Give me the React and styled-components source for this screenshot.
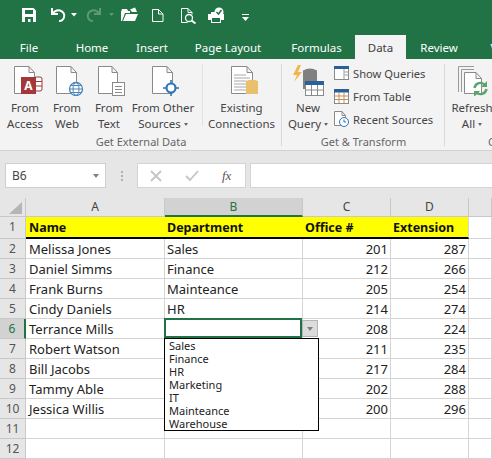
import React from "react";
import styled, { createGlobalStyle } from "styled-components";

const Global = createGlobalStyle`
  html, body { margin: 0; padding: 0; width: 492px; height: 459px; overflow: hidden; background: #fff; }
  #root { width: 492px; height: 459px; overflow: hidden; }
  * { box-sizing: border-box; }
`;

const FONT = `"Noto Sans", "Open Sans", sans-serif`;
const GREEN = "#217346";
const LINE = "#d4d4d4";

const Page = styled.div`
  width: 492px; height: 459px; overflow: hidden;
  font-family: ${FONT}; display: flex; flex-direction: column; background: #fff;
`;
const Head = styled.header`
  background: ${GREEN}; height: 59px; flex: none; display: flex; flex-direction: column;
`;
const Quick = styled.div`
  height: 35px; display: flex; align-items: flex-start; padding-left: 22px;
`;
const QuickIcon = styled.svg`
  flex: none; width: ${p => p.$w}px; height: 28px; display: block; margin-left: ${p => p.$gap || 0}px;
`;
const Tabs = styled.nav`
  height: 24px; display: flex; align-items: stretch; white-space: nowrap; overflow: hidden;
`;
const Tab = styled.div`
  flex: none; width: ${p => p.$w}px; text-align: center; font-size: 11.5px; line-height: 25px;
  color: ${p => (p.$active ? "#3d3d3d" : "#fff")};
  background: ${p => (p.$active ? "#f3f3f3" : "transparent")};
`;
const Ribbon = styled.section`
  height: 92px; flex: none; background: #f3f3f3; display: flex; overflow: hidden;
  border-bottom: 1px solid #d2d2d2;
`;
const Group = styled.div`
  flex: none; width: ${p => p.$w}px; height: 91px; display: flex; flex-direction: column;
  padding-top: 5px; position: relative;
  &::after { content: ""; position: absolute; right: 0; top: 5px; bottom: 4px; width: 1px; background: #d8d8d8; }
`;
const GroupBody = styled.div`
  height: 71px; display: flex; padding-left: ${p => p.$pad || 0}px;
`;
const GroupLabel = styled.div`
  font-size: 11px; line-height: 16px; text-align: center; color: #666; white-space: nowrap;
`;
const Big = styled.div`
  flex: none; width: ${p => p.$w}px; display: flex; flex-direction: column; align-items: center;
  color: #444; text-align: center; white-space: nowrap;
`;
const BigLabel = styled.div`
  font-size: 11.5px; line-height: 16px;
`;
const BigIcon = styled.svg`
  width: 36px; height: 32px; flex: none; margin-bottom: 4px; display: block;
`;
const Divider = styled.div`
  flex: none; width: 1px; height: 62px; background: #e2e2e2; margin: 0 0 0 6px;
`;
const Caret = styled.span`
  display: inline-block; width: 0; height: 0; margin-left: 3px; vertical-align: 2px;
  border-left: 2.5px solid transparent; border-right: 2.5px solid transparent; border-top: 3px solid #666;
`;
const SmallCol = styled.div`
  display: flex; flex-direction: column; gap: 7px; padding-top: 1px; margin-left: 1px;
`;
const Small = styled.div`
  display: flex; align-items: center; gap: 4px; height: 16px; font-size: 11.2px; color: #444; white-space: nowrap;
`;
const SmallIcon = styled.svg`
  width: 15px; height: 16px; flex: none; display: block;
`;
const FormulaBar = styled.section`
  height: 47px; flex: none; background: #e6e6e6; padding: 12px 0 10px 5px; display: flex;
`;
const NameBox = styled.div`
  width: 101px; background: #fff; border: 1px solid #cfcfcf; display: flex; align-items: center;
  justify-content: space-between; padding: 0 6px; font-size: 12px; color: #444;
`;
const ArrowDown = styled.span`
  width: 0; height: 0; border-left: 3.5px solid transparent; border-right: 3.5px solid transparent;
  border-top: 4px solid #808080;
`;
const Grip = styled.div`
  width: 31px; display: flex; flex-direction: column; align-items: center; justify-content: center; gap: 2px;
`;
const GripDot = styled.span`
  width: 2px; height: 2px; background: #b0b0b0;
`;
const FxBox = styled.div`
  width: 109px; background: #fff; border: 1px solid #d4d4d4; display: flex; align-items: center;
`;
const FxSlot = styled.svg`
  flex: none; width: ${p => p.$w}px; height: 14px; display: block;
`;
const FxText = styled.span`
  font-family: "Liberation Serif", serif; font-style: italic; font-size: 13px; color: #555; margin-left: 12px;
`;
const FormulaInput = styled.div`
  flex: 1; margin-left: 4px; background: #fff; border: 1px solid #d4d4d4; border-right: 0;
`;
const Sheet = styled.section`
  display: grid; grid-template-columns: 26px 139px 138px 88px 78px 23px;
  grid-template-rows: 19px 22px repeat(11, 20px); flex: none;
  font-size: 13px; color: #222; background: #fff;
`;
const CornerCell = styled.div`
  background: #e6e6e6; border-right: 1px solid #c8c8c8; border-bottom: 1px solid #c8c8c8; position: relative;
  &::after {
    content: ""; position: absolute; right: 3px; bottom: 2px; width: 0; height: 0;
    border-left: 13px solid transparent; border-bottom: 12px solid #b5b5b5;
  }
`;
const ColHead = styled.div`
  text-align: center; font-size: 12px; line-height: 18px; color: ${p => (p.$on ? GREEN : "#444")};
  background: ${p => (p.$on ? "#d2d2d2" : "#e6e6e6")};
  border-right: 1px solid #c8c8c8;
  border-bottom: ${p => (p.$on ? `2px solid ${GREEN}` : "1px solid #c8c8c8")};
`;
const RowHead = styled.div`
  text-align: center; font-size: 12px; line-height: 19px; color: ${p => (p.$on ? GREEN : "#555")};
  background: ${p => (p.$on ? "#d2d2d2" : "#e6e6e6")};
  border-bottom: 1px solid #c8c8c8;
  border-right: ${p => (p.$on ? `2px solid ${GREEN}` : "1px solid #c8c8c8")};
`;
const Cell = styled.div`
  position: relative; padding: 0 2px 0 ${p => (p.$first ? 3 : 2)}px; line-height: 20px; white-space: nowrap;
  text-align: ${p => (p.$num ? "right" : "left")};
  border-right: 1px solid ${LINE}; border-bottom: 1px solid ${LINE};
`;
const HeadCell = styled.div`
  padding: 0 2px 0 ${p => (p.$first ? 3 : 2)}px; font-weight: 700; font-size: 12.5px; line-height: 21px;
  white-space: nowrap; color: #111;
  background: #ffff00; border-bottom: 2px solid #000;
  border-right: ${p => (p.$last ? `1px solid ${LINE}` : "0")};
`;
const Selection = styled.div`
  position: absolute; left: -1px; top: -1px; right: 0; bottom: 0; border: 2px solid ${GREEN}; z-index: 2;
`;
const DropButton = styled.div`
  position: absolute; left: 100%; top: 1px; width: 16px; height: 17px; z-index: 3;
  background: #dcdcdc; border: 1px solid #b5b5b5; display: flex; align-items: center; justify-content: center;
`;
const DropList = styled.ul`
  position: absolute; left: -1px; top: 19px; width: 155px; height: 93px; z-index: 4; margin: 0; padding: 0 0 0 4px;
  list-style: none; background: #fff; border: 1px solid #000; font-size: 11px; line-height: 13px; color: #222;
`;

const Doc = ({ x, y, w, h, fold = 6, stroke = "#8a8a8a", fill = "#fff" }) => (
  <path
    d={`M${x + 0.5} ${y + 0.5}H${x + w - fold}L${x + w - 0.5} ${y + fold + 0.5}V${y + h - 0.5}H${x + 0.5}ZM${x + w - fold} ${y + 0.5}V${y + fold + 0.5}H${x + w - 0.5}`}
    fill={fill} stroke={stroke} />
);

const Access = () => (
  <BigIcon viewBox="0 0 36 32">
    <Doc x={7} y={2} w={21} h={28} />
    <rect x="27" y="13" width="8" height="14" rx="2" fill="#fff" stroke="#a4373a" />
    <path d="M27 17.500h8M27 22h8" stroke="#a4373a" />
    <rect x="14" y="13" width="15" height="17" fill="#a4373a" />
    <text x="21.500" y="26" textAnchor="middle" fontSize="12" fontWeight="700" fill="#fff" fontFamily="Noto Sans">A</text>
  </BigIcon>
);
const Web = () => (
  <BigIcon viewBox="0 0 36 32">
    <Doc x={7} y={2} w={21} h={28} />
    <circle cx="27" cy="25" r="6.500" fill="#fff" stroke="#4a86b8" strokeWidth="1.300" />
    <ellipse cx="27" cy="25" rx="3" ry="6.500" fill="none" stroke="#4a86b8" />
    <path d="M20.500 25h13M21.500 21.500h11M21.500 28.500h11" stroke="#4a86b8" />
  </BigIcon>
);
const TextFile = () => (
  <BigIcon viewBox="0 0 36 32">
    <Doc x={7} y={2} w={20} h={28} />
    <rect x="21.500" y="18.500" width="12" height="13" fill="#fff" stroke="#8a8a8a" />
    <path d="M24 22.500h7M24 25.500h7M24 28.500h7" stroke="#8a8a8a" />
  </BigIcon>
);
const Other = () => (
  <BigIcon viewBox="0 0 36 32">
    <Doc x={7} y={2} w={21} h={28} />
    <circle cx="26" cy="24" r="4.500" fill="#fff" stroke="#2e75b5" strokeWidth="2.200" />
    <path d="M26 16v4M26 28v4M18 24h4M30 24h4" stroke="#2e75b5" strokeWidth="1.600" />
  </BigIcon>
);
const Existing = () => (
  <BigIcon viewBox="0 0 36 32">
    <Doc x={7} y={2} w={22} h={28} />
    <path d="M10 11h12M10 14h16M10 17h12M10 20h12M10 23h12M10 26h12" stroke="#a8a8a8" />
    <path d="M22 17q6-2.500 12 0V30H22Z" fill="#e8c06e" />
  </BigIcon>
);
const Query = () => (
  <BigIcon viewBox="0 0 36 32">
    <path d="M8 1L3 11h4L4 18l8-10H8l3-7Z" fill="#f3b64d" />
    <path d="M13 6.500q7-4 14 0V25H13Z" fill="#808080" />
    <rect x="15.500" y="17.500" width="18" height="14" fill="#fff" stroke="#8a8a8a" />
    <rect x="15" y="17" width="19" height="4" fill="#2a6099" />
    <path d="M21.500 21v10M27.500 21v10M16 26h17" stroke="#8a8a8a" />
  </BigIcon>
);
const Refresh = () => (
  <BigIcon viewBox="0 0 36 32">
    <path d="M4.500 28V2.500H20M7.500 28V5.500H20" fill="none" stroke="#9a9a9a" />
    <Doc x={10} y={8} w={18} h={22} />
    <path d="M20.500 24a6 6 0 0 1 10.500-3M32.500 25a6 6 0 0 1-10.500 3" fill="none" stroke="#5aa36e" strokeWidth="2.400" />
    <path d="M33 17v6h-6ZM20 33v-6h6Z" fill="#5aa36e" />
  </BigIcon>
);

const ShowQ = () => (
  <SmallIcon viewBox="0 0 15 16">
    <rect x=".5" y="1.500" width="14" height="13" fill="#fff" stroke="#8a8a8a" />
    <rect x="0" y="1" width="15" height="3" fill="#2a6099" />
    <path d="M10 4v10M10.500 7h4M10.500 10h4" stroke="#9a9a9a" />
  </SmallIcon>
);
const TableI = () => (
  <SmallIcon viewBox="0 0 15 16">
    <rect x=".5" y="1.500" width="14" height="14" fill="#fff" stroke="#8a8a8a" />
    <rect x="0" y="1" width="15" height="3.500" fill="#2a6099" />
    <path d="M5 4v11M10 4v11M1 8h13M1 11.500h13" stroke="#c98d5a" />
  </SmallIcon>
);
const Recent = () => (
  <SmallIcon viewBox="0 0 15 16">
    <Doc x={0} y={0} w={12} h={15} fold={4} />
    <circle cx="10" cy="11" r="4.500" fill="#fff" stroke="#2e75b5" />
    <path d="M10 8.500V11h2" fill="none" stroke="#2e75b5" />
  </SmallIcon>
);

const REDO = "#5b9a76";

const QuickBar = () => (
  <Quick>
    <QuickIcon $w={14} viewBox="0 0 14 28">
      <path d="M0 8h11.500L14 10.500V22H0Z" fill="#fff" />
      <rect x="3" y="10" width="8" height="4" fill={GREEN} />
      <path d="M3 22v-5h8v5H8.500v-3H6v3Z" fill={GREEN} />
    </QuickIcon>
    <QuickIcon $w={22} $gap={15} viewBox="0 0 22 28" fill="none">
      <path d="M1 8v6h6" stroke="#fff" strokeWidth="2" />
      <path d="M1.500 13.500C4 10.500 7 10 9 10.500c3.500 1 5 4 4 7s-3 3.500-5 3.500" stroke="#fff" strokeWidth="2" />
    </QuickIcon>
    <QuickIcon $w={6} $gap={-2} viewBox="0 0 6 28"><path d="M0 13h6l-3 3.500Z" fill="#fff" /></QuickIcon>
    <QuickIcon $w={16} $gap={9} viewBox="0 0 16 28" fill="none">
      <path d="M14 8v6H8" stroke={REDO} strokeWidth="2" />
      <path d="M13.500 13.500C11 10.500 8 10 6 10.500c-3.500 1-5 4-4 7s3 3.500 5 3.500" stroke={REDO} strokeWidth="2" />
    </QuickIcon>
    <QuickIcon $w={6} $gap={7} viewBox="0 0 6 28"><path d="M0 13h5l-2.500 3Z" fill={REDO} /></QuickIcon>
    <QuickIcon $w={17} $gap={6} viewBox="0 0 17 28">
      <path d="M0 12l1-3h5l1 2h2v2H4l-3 8H0Z" fill="#fff" />
      <path d="M5 14h12l-3 7H2Z" fill="#fff" />
      <path d="M9 9.500l5-2 2 4.500h-5Z" fill="#fff" />
    </QuickIcon>
    <QuickIcon $w={12} $gap={14} viewBox="0 0 12 28">
      <path d="M.5 9.500h6l4.500 4.500v7.500H.5Z" fill="none" stroke="#fff" />
      <path d="M6.500 9.500v4.500H11" fill="none" stroke="#fff" />
    </QuickIcon>
    <QuickIcon $w={16} $gap={17} viewBox="0 0 16 28" fill="none">
      <path d="M.5 8.500H7l4 4v2M.5 8.500v14h6" stroke="#fff" />
      <path d="M7 8.500v4h4" stroke="#fff" />
      <circle cx="8" cy="18" r="3.500" stroke="#fff" strokeWidth="1.300" />
      <path d="M10.500 20.500l4 3" stroke="#fff" strokeWidth="2" />
    </QuickIcon>
    <QuickIcon $w={17} $gap={11} viewBox="0 0 17 28">
      <path d="M0 14h3v-2h10v2h3v6h-3v3H3v-3H0Z" fill="#fff" />
      <rect x="4" y="18" width="8" height="4" fill={GREEN} />
      <circle cx="11" cy="12" r="4.500" fill="#fff" />
      <path d="M8.500 12l2 2 3-4" fill="none" stroke={GREEN} strokeWidth="1.500" />
    </QuickIcon>
    <QuickIcon $w={8} $gap={17} viewBox="0 0 8 28">
      <path d="M0 14.500h7" stroke="#fff" />
      <path d="M0 17h7l-3.500 4Z" fill="#fff" />
    </QuickIcon>
  </Quick>
);

const tabs = [["File", 58], ["Home", 68], ["Insert", 52], ["Page Layout", 100], ["Formulas", 77], ["Data", 51, true], ["Review", 66], ["View", 62]];
const columns = ["A", "B", "C", "D", ""];
const people = [
  ["Melissa Jones", "Sales", 201, 287],
  ["Daniel Simms", "Finance", 212, 266],
  ["Frank Burns", "Mainteance", 205, 254],
  ["Cindy Daniels", "HR", 214, 274],
  ["Terrance Mills", "", 208, 224],
  ["Robert Watson", "", 211, 235],
  ["Bill Jacobs", "", 217, 284],
  ["Tammy Able", "", 202, 288],
  ["Jessica Willis", "", 200, 296],
  ["", "", "", ""],
  ["", "", "", ""],
];
const options = ["Sales", "Finance", "HR", "Marketing", "IT", "Mainteance", "Warehouse"];

export default function App() {
  return (
    <Page>
      <Global />
      <Head>
        <QuickBar />
        <Tabs>
          {tabs.map(([t, w, a]) => <Tab key={t} $w={w} $active={a}>{t}</Tab>)}
        </Tabs>
      </Head>
      <Ribbon>
        <Group $w={282}>
          <GroupBody $pad={4}>
            <Big $w={42}><Access /><BigLabel>From<br />Access</BigLabel></Big>
            <Big $w={42}><Web /><BigLabel>From<br />Web</BigLabel></Big>
            <Big $w={42}><TextFile /><BigLabel>From<br />Text</BigLabel></Big>
            <Big $w={66}><Other /><BigLabel>From Other<br />Sources<Caret /></BigLabel></Big>
            <Divider />
            <Big $w={77}><Existing /><BigLabel>Existing<br />Connections</BigLabel></Big>
          </GroupBody>
          <GroupLabel>Get External Data</GroupLabel>
        </Group>
        <Group $w={163}>
          <GroupBody $pad={1}>
            <Big $w={50}><Query /><BigLabel>New<br />Query<Caret /></BigLabel></Big>
            <SmallCol>
              <Small><ShowQ />Show Queries</Small>
              <Small><TableI />From Table</Small>
              <Small><Recent />Recent Sources</Small>
            </SmallCol>
          </GroupBody>
          <GroupLabel>Get &amp; Transform</GroupLabel>
        </Group>
        <Group $w={150}>
          <GroupBody>
            <Big $w={54}><Refresh /><BigLabel>Refresh<br />All<Caret /></BigLabel></Big>
          </GroupBody>
          <GroupLabel>Connections</GroupLabel>
        </Group>
      </Ribbon>
      <FormulaBar>
        <NameBox>B6<ArrowDown /></NameBox>
        <Grip><GripDot /><GripDot /><GripDot /></Grip>
        <FxBox>
          <FxSlot $w={36} viewBox="0 0 36 14"><path d="M13 2l10 10M23 2L13 12" stroke="#c4c4c4" strokeWidth="1.800" /></FxSlot>
          <FxSlot $w={36} viewBox="0 0 36 14"><path d="M12 7l4 4 8-9" fill="none" stroke="#c4c4c4" strokeWidth="1.800" /></FxSlot>
          <FxText>fx</FxText>
        </FxBox>
        <FormulaInput />
      </FormulaBar>
      <Sheet>
        <CornerCell />
        {columns.map((c, i) => <ColHead key={i} $on={c === "B"}>{c}</ColHead>)}
        <RowHead>1</RowHead>
        <HeadCell $first>Name</HeadCell>
        <HeadCell>Department</HeadCell>
        <HeadCell>Office #</HeadCell>
        <HeadCell $last>Extension</HeadCell>
        <Cell />
        {people.map((p, i) => {
          const row = i + 2;
          const on = row === 6;
          return (
            <React.Fragment key={row}>
              <RowHead $on={on}>{row}</RowHead>
              <Cell $first>{p[0]}</Cell>
              <Cell>
                {p[1]}
                {on && (
                  <>
                    <Selection />
                    <DropButton><ArrowDown /></DropButton>
                    <DropList>{options.map(o => <li key={o}>{o}</li>)}</DropList>
                  </>
                )}
              </Cell>
              <Cell $num>{p[2]}</Cell>
              <Cell $num>{p[3]}</Cell>
              <Cell />
            </React.Fragment>
          );
        })}
      </Sheet>
    </Page>
  );
}
